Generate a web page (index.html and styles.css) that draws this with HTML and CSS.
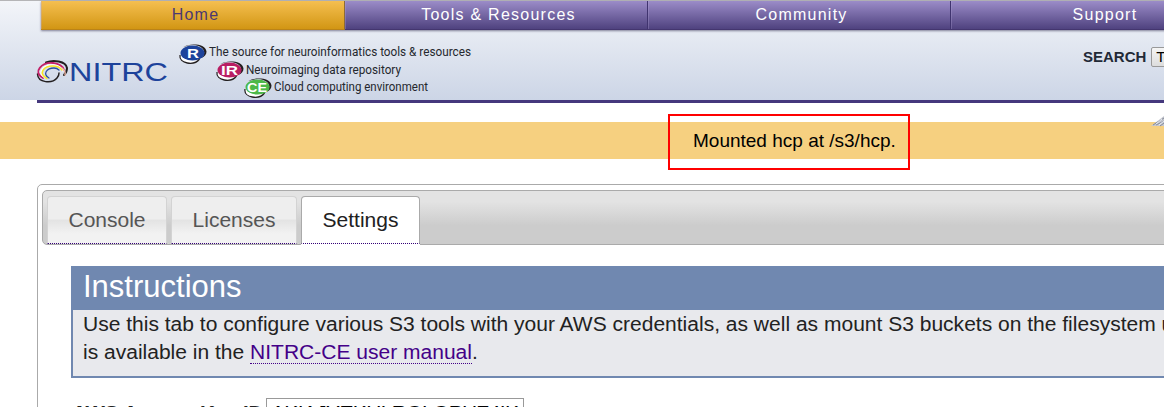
FILE: index.html
```html
<!DOCTYPE html>
<html lang="en">
<head>
<meta charset="utf-8">
<title>NITRC-CE Settings</title>
<link rel="stylesheet" href="styles.css">
</head>
<body>
<header class="header">
  <nav class="nav">
    <a class="nav-item nav-home">Home</a>
    <a class="nav-item nav-tools">Tools &amp; Resources</a>
    <a class="nav-item nav-community">Community</a>
    <a class="nav-item nav-support">Support</a>
  </nav>
  <div class="brand-row">
    <svg class="brand" width="450" height="66" viewBox="30 34 450 66">
      <defs>
        <g id="orbit">
          <path d="M-12 2C-12 11 2 12 7 6" fill="#fff" stroke="#fff" stroke-width="1.500"/>
          <path d="M-9 -6C-4 -9.500 13 -10 14 -1.500Q14 2.500 9 5C14 0 12 -6 3 -7.800Q-3 -8.500 -9 -6Z" fill="#231f20"/>
          <path d="M-12.500 2C-14 11 2 13 7 6" fill="none" stroke="#231f20" stroke-width="1.300"/>
        </g>
      </defs>
      <g fill="none" stroke-linecap="round">
        <path d="M46 62.500C53 59.500 66 61 67 68Q67 72 64 75" stroke="#231f20" stroke-width="2"/>
        <path d="M37.500 74C38 83 52 84 57 78Q59 76 59 73" stroke="#231f20" stroke-width="1.500"/>
        <path d="M43 78C32 72 42 62 53 63Q62 64 64 70" stroke="#c31f68" stroke-width="1.800"/>
        <path d="M44.500 77.500C36 72 44 64 54 65Q61 66 63 71" stroke="#fff" stroke-width="1.300"/>
        <path d="M47 78.500C38 74 43 66 53 66Q59 66 62 70" stroke="#f8e727" stroke-width="1.500"/>
        <path d="M49 78C42 74 47 68 54 68Q57 68 59 70" stroke="#2b50a0" stroke-width="1.300"/>
        <path d="M62 68Q66 71 65 75" stroke="#f4b9a8" stroke-width="1.300"/>
      </g>
      <text class="logo-text" x="69" y="80.500" textLength="99" lengthAdjust="spacingAndGlyphs">NITRC</text>
      <use href="#orbit" x="192.500" y="53"/>
      <ellipse cx="192.500" cy="53" rx="12" ry="7.500" fill="#1d439b"/>
      <text class="badge" x="187" y="57.500" textLength="12" lengthAdjust="spacingAndGlyphs">R</text>
      <use href="#orbit" x="229.500" y="70"/>
      <ellipse cx="229.500" cy="70" rx="12" ry="7.500" fill="#b91d62"/>
      <text class="badge" x="221" y="74.500" textLength="17" lengthAdjust="spacingAndGlyphs">IR</text>
      <use href="#orbit" x="257.500" y="87"/>
      <ellipse cx="257.500" cy="87" rx="12" ry="7.500" fill="#4db848"/>
      <text class="badge" x="247" y="91.500" textLength="20" lengthAdjust="spacingAndGlyphs">CE</text>
      <text class="tag" x="209" y="56" textLength="262" lengthAdjust="spacingAndGlyphs">The source for neuroinformatics tools &amp; resources</text>
      <text class="tag" x="246" y="73.500" textLength="155" lengthAdjust="spacingAndGlyphs">Neuroimaging data repository</text>
      <text class="tag" x="274" y="91" textLength="154" lengthAdjust="spacingAndGlyphs">Cloud computing environment</text>
    </svg>
    <div class="search"><span>SEARCH</span><span class="search-select">Tools</span></div>
  </div>
</header>
<div class="rule"></div>
<div class="notice">
  <span class="notice-text">Mounted hcp at /s3/hcp.</span>
  <div class="highlight"></div>
  <svg class="corner" width="13" height="14" viewBox="0 0 13 14"><path d="M0 13L13 3V13Z" fill="#c6c8cf"/><path d="M2 12L13 5M5 12L13 8M9 13L13 10" stroke="#858b9b"/><path d="M5 11L11 6M8 12L13 8" stroke="#e9edf2"/></svg>
</div>
<main class="panel">
  <div class="tabs">
    <a class="tab">Console</a>
    <a class="tab tab-licenses">Licenses</a>
    <a class="tab tab-active">Settings</a>
  </div>
  <section class="instructions">
    <h1>Instructions</h1>
    <p>Use this tab to configure various S3 tools with your AWS credentials, as well as mount S3 buckets on the filesystem using s3fs.<br>is available in the <a class="manual">NITRC-CE user manual</a>.</p>
  </section>
  <div class="field">
    <label class="field-label">AWS Access Key ID</label>
    <div class="field-input">AKIAJYEKHLRGLQPHZ4IK</div>
  </div>
</main>
</body>
</html>
```

FILE: styles.css
```css
* { box-sizing: border-box; }
html, body { margin: 0; width: 1164px; height: 407px; overflow: hidden; }
body { background: #fff; font-family: "Liberation Sans", Arial, sans-serif; color: #222; }
.header { height: 100px; border-top: 1px solid #b5b5b7; background: linear-gradient(#f3f5f9, #ccd5e6); }
.nav { display: flex; width: 1213px; height: 29px; margin-left: 41px; box-shadow: 0 1px 2px rgba(60,55,90,.6); }
.nav-item { flex: 0 0 303px; height: 29px; padding-top: 4px; text-align: center; color: #fff; font-size: 16px; line-height: 20px; letter-spacing: 1.25px; background: linear-gradient(#9b8cc8, #4f427f); border-right: 1px solid #40346f; border-bottom: 1px solid #44366f; box-shadow: inset 1px 0 rgba(180,165,215,.3); }
.nav-home { flex-basis: 304px; padding-left: 6px; color: #4b3972; background: linear-gradient(#f5bf50, #d29614); border-right-color: #8e6b36; border-bottom-color: #bb8317; }
.nav-tools, .nav-community { padding-left: 5px; }
.nav-support { padding-left: 6px; }
.brand-row { display: flex; height: 70px; padding: 4px 0 0 30px; }
.brand { display: block; flex: none; }
.logo-text { font: 25px "Liberation Sans", sans-serif; fill: #1d439b; }
.badge { font: bold 12.5px "Liberation Sans", sans-serif; fill: #fff; }
.tag { font: 13.5px Roboto, sans-serif; fill: #25282e; }
.search { display: flex; flex: none; margin: 12px 0 0 603px; gap: 5px; height: 21px; font-size: 15px; line-height: 21px; font-weight: bold; color: #222936; }
.search-select { width: 80px; height: 20px; margin-top: 1px; padding-left: 4px; border: 1px solid #999; border-radius: 2px; background: linear-gradient(#f5f5f5, #ddd); color: #000; font-weight: normal; font-size: 15px; line-height: 18px; }
.rule { height: 3px; margin-left: 37px; background: #45387d; }
.notice { position: relative; height: 37px; margin-top: 19px; padding: 9px 0 0 693px; background: #f6d080; color: #000; font-size: 19px; line-height: 20px; }
.notice-text { white-space: nowrap; }
.highlight { position: absolute; left: 668px; top: -8px; width: 242px; height: 56px; border: 2px solid #f00; }
.corner { position: absolute; right: 0; top: -9px; }
.panel { width: 1300px; height: 300px; margin: 25px 0 0 37px; padding: 5px 4px; border: 1px solid #aaa; border-radius: 5px; }
.tabs { display: flex; gap: 4px; height: 55px; padding: 5px 0 0 4px; border: 1px solid #aaa; border-radius: 5px; background: linear-gradient(#e3e3e3 0 20%, #ccc 65%); }
.tab { flex: none; width: 120px; height: 48px; border: 1px solid #d3d3d3; border-bottom: 1px dotted #307; border-radius: 4px 4px 0 0; background: linear-gradient(#eee 0 48%, #e3e3e3 50%, #f2f2f2 80%); color: #555; text-align: center; font-size: 21px; line-height: 46px; }
.tab-licenses { width: 126px; }
.tab-active { width: 119px; border-color: #aaa; border-bottom-color: #307; background: #fff; color: #212121; box-shadow: 0 1px #fff; }
.instructions { height: 112px; margin: 21px 0 0 29px; border: 2px solid #7088b0; background: #e8e9ed; }
.instructions h1 { height: 42px; margin: 0; padding-left: 10px; background: #7088b0; color: #fff; font-size: 31px; font-weight: normal; line-height: 37px; }
.instructions p { margin: 0; padding-left: 10px; white-space: nowrap; font-size: 21.02px; line-height: 28px; }
.manual { color: #408; border-bottom: 1px dotted #408; }
.field { display: flex; margin: 20px 0 0 29px; }
.field-label { width: 195px; padding-left: 1px; font-size: 20.5px; font-weight: bold; line-height: 29px; white-space: nowrap; letter-spacing: -.1px; }
.field-input { width: 258px; height: 30px; padding-left: 4px; border: 1px solid #999; background: #fff; color: #000; font-size: 21px; line-height: 28px; letter-spacing: -.65px; white-space: nowrap; }
```
